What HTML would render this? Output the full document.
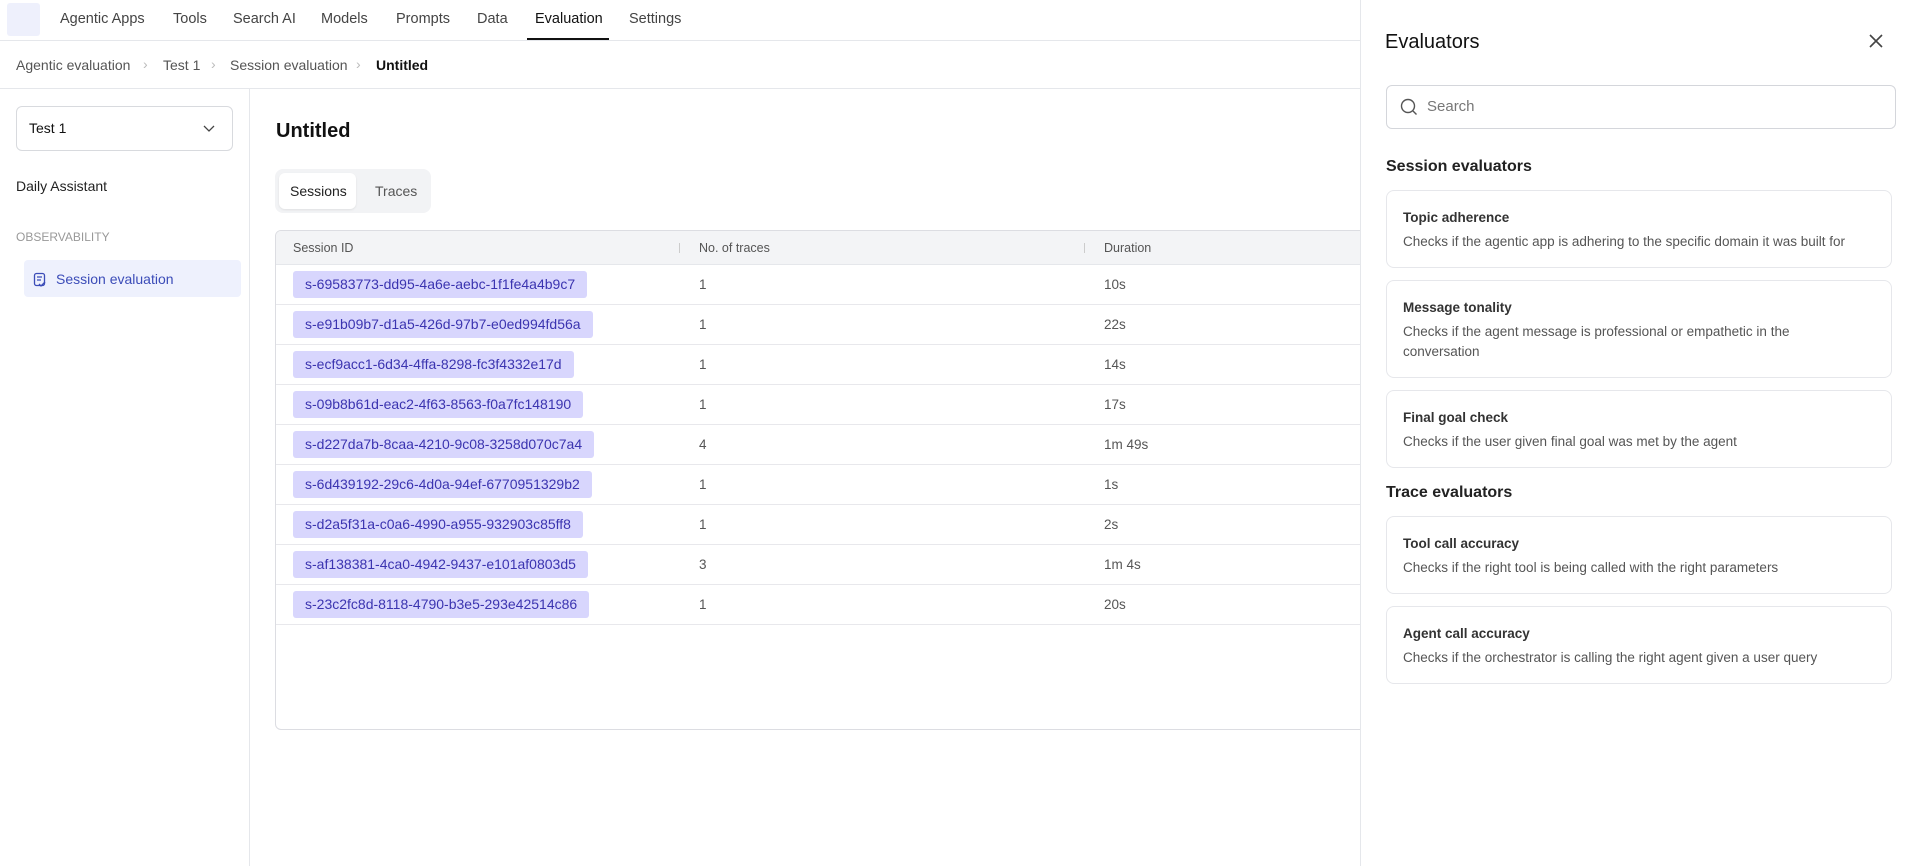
<!DOCTYPE html>
<html><head><meta charset="utf-8"><style>
*{box-sizing:border-box;margin:0;padding:0}
body{width:1920px;height:866px;overflow:hidden;background:#fff;font-family:"Liberation Sans",sans-serif;color:#222;position:relative}
.abs{position:absolute}
.nav{left:0;top:0;width:1920px;height:41px;border-bottom:1px solid #e5e7eb}
.nav span{position:absolute;top:11px;font-size:14.5px;color:#444}
.crumb{top:57px;font-size:14px;color:#555}
.sep{top:56px;font-size:14px;color:#bbb}
.row{position:absolute;left:0;width:1085px;height:40px;border-bottom:1px solid #e8e8ec}
.chip{position:absolute;left:17px;top:6px;height:27px;line-height:27px;padding:0 12px;background:#d8d6fd;color:#3b34b0;font-size:14px;border-radius:3px}
.n{position:absolute;left:423px;top:12px;font-size:13.5px;color:#555}
.d{position:absolute;left:828px;top:12px;font-size:13.5px;color:#555}
.card{position:absolute;left:1386px;width:506px;border:1px solid #e6e7eb;border-radius:8px;padding:0 16px}
.card b{display:block;font-size:13.5px;color:#333;margin-top:19px}
.card p{font-size:13.5px;color:#555;margin-top:7px;line-height:20px}
</style></head><body>
<div class="abs nav">
<div class="abs" style="left:7px;top:3px;width:33px;height:33px;background:#eef0fc;border-radius:3px"></div>
<span style="left:60px">Agentic Apps</span><span style="left:173px">Tools</span><span style="left:233px">Search AI</span><span style="left:321px">Models</span><span style="left:396px">Prompts</span><span style="left:477px">Data</span><span style="left:535px;color:#111">Evaluation</span><span style="left:629px">Settings</span>
<div class="abs" style="left:527px;top:38px;width:82px;height:2px;background:#111"></div>
</div>
<span class="abs crumb" style="left:16px">Agentic evaluation</span><span class="abs sep" style="left:143px">›</span>
<span class="abs crumb" style="left:163px">Test 1</span><span class="abs sep" style="left:211px">›</span>
<span class="abs crumb" style="left:230px">Session evaluation</span><span class="abs sep" style="left:356px">›</span>
<span class="abs crumb" style="left:376px;color:#111;font-weight:bold">Untitled</span>
<div class="abs" style="left:0;top:88px;width:1360px;height:1px;background:#e5e7eb"></div>
<div class="abs" style="left:249px;top:89px;width:1px;height:777px;background:#e5e7eb"></div>
<div class="abs" style="left:16px;top:106px;width:217px;height:45px;border:1px solid #d8dade;border-radius:6px"></div>
<span class="abs" style="left:29px;top:120px;font-size:14px;color:#111">Test 1</span>
<svg class="abs" style="left:203px;top:122px" width="12" height="12" viewBox="0 0 12 12"><path d="M1 4l5 5 5-5" fill="none" stroke="#444" stroke-width="1.3"/></svg>
<span class="abs" style="left:16px;top:178px;font-size:14px;color:#222">Daily Assistant</span>
<span class="abs" style="left:16px;top:230px;font-size:12px;color:#999">OBSERVABILITY</span>
<div class="abs" style="left:24px;top:260px;width:217px;height:37px;background:#eef1fd;border-radius:4px"></div>
<svg class="abs" style="left:33px;top:272px" width="14" height="16" viewBox="0 0 14 16"><rect x="1.5" y="1.5" width="10" height="12" rx="2" fill="none" stroke="#3b4cb8" stroke-width="1.3"/><path d="M4 5h5M4 8h4M6 12l2 2 4-4" fill="none" stroke="#3b4cb8" stroke-width="1.3"/></svg>
<span class="abs" style="left:56px;top:271px;font-size:14px;color:#3b4cb8">Session evaluation</span>
<span class="abs" style="left:276px;top:120px;font-size:20px;font-weight:bold;color:#111">Untitled</span>
<div class="abs" style="left:275px;top:169px;width:156px;height:44px;background:#f2f3f5;border-radius:8px"></div>
<div class="abs" style="left:279px;top:173px;width:77px;height:36px;background:#fff;border-radius:6px;box-shadow:0 1px 2px rgba(0,0,0,.08)"></div>
<span class="abs" style="left:290px;top:183px;font-size:14px;color:#222">Sessions</span>
<span class="abs" style="left:375px;top:183px;font-size:14px;color:#555">Traces</span>
<div class="abs" style="left:275px;top:230px;width:1100px;height:500px;border:1px solid #dcdde2;border-radius:6px;overflow:hidden">
<div class="abs" style="left:0;top:0;width:1100px;height:34px;background:#f3f4f6;border-bottom:1px solid #e5e7eb"></div>
<span class="abs" style="left:17px;top:10px;font-size:12.5px;color:#555">Session ID</span>
<div class="abs" style="left:403px;top:12px;width:1px;height:10px;background:#ccc"></div>
<span class="abs" style="left:423px;top:10px;font-size:12.5px;color:#555">No. of traces</span>
<div class="abs" style="left:808px;top:12px;width:1px;height:10px;background:#ccc"></div>
<span class="abs" style="left:828px;top:10px;font-size:12.5px;color:#555">Duration</span>
<div class="row" style="top:34px"><span class="chip">s-69583773-dd95-4a6e-aebc-1f1fe4a4b9c7</span><span class="n">1</span><span class="d">10s</span></div>
<div class="row" style="top:74px"><span class="chip">s-e91b09b7-d1a5-426d-97b7-e0ed994fd56a</span><span class="n">1</span><span class="d">22s</span></div>
<div class="row" style="top:114px"><span class="chip">s-ecf9acc1-6d34-4ffa-8298-fc3f4332e17d</span><span class="n">1</span><span class="d">14s</span></div>
<div class="row" style="top:154px"><span class="chip">s-09b8b61d-eac2-4f63-8563-f0a7fc148190</span><span class="n">1</span><span class="d">17s</span></div>
<div class="row" style="top:194px"><span class="chip">s-d227da7b-8caa-4210-9c08-3258d070c7a4</span><span class="n">4</span><span class="d">1m 49s</span></div>
<div class="row" style="top:234px"><span class="chip">s-6d439192-29c6-4d0a-94ef-6770951329b2</span><span class="n">1</span><span class="d">1s</span></div>
<div class="row" style="top:274px"><span class="chip">s-d2a5f31a-c0a6-4990-a955-932903c85ff8</span><span class="n">1</span><span class="d">2s</span></div>
<div class="row" style="top:314px"><span class="chip">s-af138381-4ca0-4942-9437-e101af0803d5</span><span class="n">3</span><span class="d">1m 4s</span></div>
<div class="row" style="top:354px"><span class="chip">s-23c2fc8d-8118-4790-b3e5-293e42514c86</span><span class="n">1</span><span class="d">20s</span></div>
</div>
<div class="abs" style="left:1360px;top:0;width:560px;height:866px;background:#fff;border-left:1px solid #e5e7eb"></div>
<span class="abs" style="left:1385px;top:31px;font-size:20px;color:#111">Evaluators</span>
<svg class="abs" style="left:1868px;top:33px" width="16" height="16" viewBox="0 0 16 16"><path d="M2 2l12 12M14 2L2 14" stroke="#444" stroke-width="1.6"/></svg>
<div class="abs" style="left:1386px;top:85px;width:510px;height:44px;border:1px solid #d4d6db;border-radius:6px"></div>
<svg class="abs" style="left:1400px;top:98px" width="18" height="18" viewBox="0 0 18 18"><circle cx="8" cy="8" r="6.5" fill="none" stroke="#555" stroke-width="1.4"/><path d="M13 13l3.5 3.5" stroke="#555" stroke-width="1.4"/></svg>
<span class="abs" style="left:1427px;top:98px;font-size:15px;color:#777">Search</span>
<span class="abs" style="left:1386px;top:158px;font-size:16px;font-weight:bold;color:#222">Session evaluators</span>
<div class="card" style="top:190px;height:78px"><b>Topic adherence</b><p>Checks if the agentic app is adhering to the specific domain it was built for</p></div>
<div class="card" style="top:280px;height:98px"><b>Message tonality</b><p>Checks if the agent message is professional or empathetic in the<br>conversation</p></div>
<div class="card" style="top:390px;height:78px"><b>Final goal check</b><p>Checks if the user given final goal was met by the agent</p></div>
<span class="abs" style="left:1386px;top:484px;font-size:16px;font-weight:bold;color:#222">Trace evaluators</span>
<div class="card" style="top:516px;height:78px"><b>Tool call accuracy</b><p>Checks if the right tool is being called with the right parameters</p></div>
<div class="card" style="top:606px;height:78px"><b>Agent call accuracy</b><p>Checks if the orchestrator is calling the right agent given a user query</p></div>
</body></html>
